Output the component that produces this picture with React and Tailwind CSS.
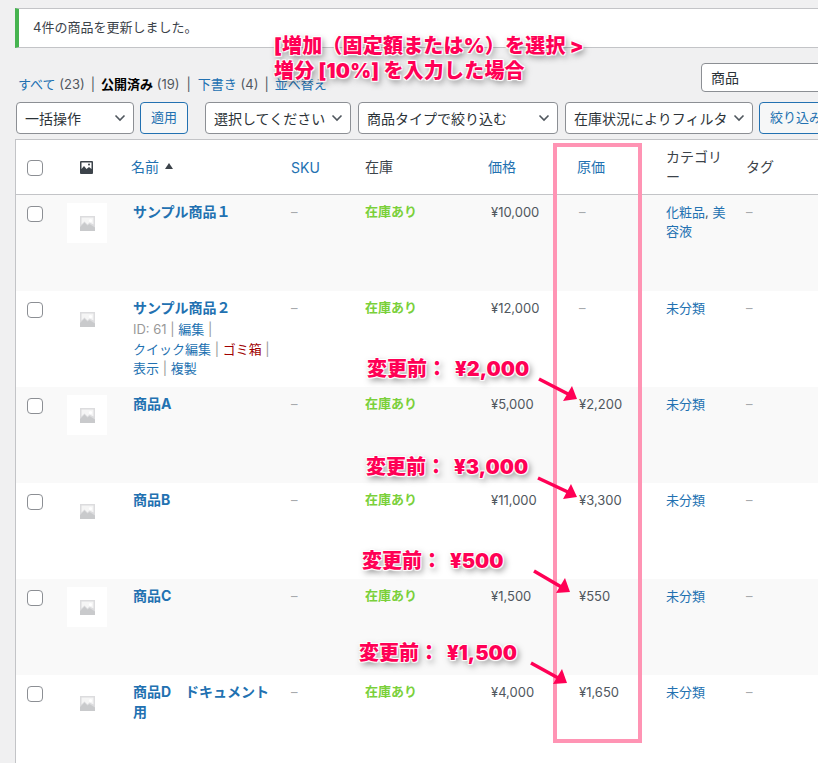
import React from 'react'

const rowCols = 'grid grid-cols-[51px_66px_158px_74px_123px_89px_89px_80px_100px]'

const products = [
  { name: 'サンプル商品１', price: '¥10,000', cost: '–', cat: ['化粧品', '美容液'] },
  { name: 'サンプル商品２', price: '¥12,000', cost: '–', cat: ['未分類'], actions: true },
  { name: '商品A', price: '¥5,000', cost: '¥2,200', cat: ['未分類'] },
  { name: '商品B', price: '¥11,000', cost: '¥3,300', cat: ['未分類'] },
  { name: '商品C', price: '¥1,500', cost: '¥550', cat: ['未分類'] },
  { name: '商品D　ドキュメント用', price: '¥4,000', cost: '¥1,650', cat: ['未分類'] },
]

const notes = [
  { label: '変更前：', value: '¥2,000', pos: 'left-[367px] top-[355px]' },
  { label: '変更前：', value: '¥3,000', pos: 'left-[366px] top-[453px]' },
  { label: '変更前：', value: '¥500', pos: 'left-[362px] top-[547px]' },
  { label: '変更前：', value: '¥1,500', pos: 'left-[359px] top-[639px]' },
]

const arrows = [
  { x1: 539, y1: 379, x2: 577, y2: 399, head: '577,399 563,401 572,386' },
  { x1: 538, y1: 478, x2: 577, y2: 497, head: '577,497 563,499 571,484' },
  { x1: 534, y1: 571, x2: 570, y2: 592, head: '570,592 556,593 565,578' },
  { x1: 531, y1: 663, x2: 567, y2: 683, head: '567,683 553,684 562,669' },
]

const Chevron = () => (
  <svg width="12" height="8" viewBox="0 0 12 8" fill="none" stroke="#50575e" strokeWidth="1.6" className="shrink-0">
    <path d="M1.5 1.5 6 6l4.5-4.5" />
  </svg>
)

const Select = ({ label, w }) => (
  <div className={`${w} h-[32px] flex items-center justify-between pl-[8px] pr-[7px] bg-white border border-[#8c8f94] rounded-[4px] text-[14px] text-[#2c3338] whitespace-nowrap`}>
    <span>{label}</span>
    <Chevron />
  </div>
)

const Checkbox = () => <span className="block w-4 h-4 bg-white border border-[#8c8f94] rounded-[4px]" />

const Thumb = () => (
  <div className="w-10 h-10 bg-white flex items-center justify-center">
    <svg width="15" height="15" viewBox="0 0 15 15">
      <rect width="15" height="15" fill="#dcdcde" />
      <path d="M0 11 4.5 6.5l3 3 2-1.5L15 11.5V15H0z" fill="#c9cacc" />
      <circle cx="10.5" cy="4.5" r="1.6" fill="#fff" />
      <path d="M1.5 1.5h12v7l-4-2-2 2-3-3-3 3z" fill="#fff" opacity="0.7" />
    </svg>
  </div>
)

const Sep = () => <span className="text-[#999999]"> | </span>

const Row = ({ item, index }) => (
  <div className={`${rowCols} h-[96px] text-[13px] leading-[20px] ${index % 2 === 0 ? 'bg-[#f9f9f9]' : 'bg-white'}`}>
    <div className="pl-[11px] pt-[11px]"><Checkbox /></div>
    <div className="pt-[8px]"><Thumb /></div>
    <div className="pt-[7px] pr-[14px]">
      <div className="text-[14px] font-bold text-[#2271b1]">{item.name}</div>
      {item.actions && (
        <div className="text-[13px] leading-[19.5px] text-[#999999] pt-[2px]">
          <span className="whitespace-nowrap">ID: 61<Sep /></span>
          <span className="whitespace-nowrap text-[#2271b1]">編集<Sep /></span>{' '}
          <span className="whitespace-nowrap text-[#2271b1]">クイック編集<Sep /></span>
          <span className="whitespace-nowrap text-[#a00000]">ゴミ箱<Sep /></span>{' '}
          <span className="whitespace-nowrap text-[#2271b1]">表示<Sep /></span>
          <span className="whitespace-nowrap text-[#2271b1]">複製</span>
        </div>
      )}
    </div>
    <div className="pt-[7px] text-[#a7aaad]">–</div>
    <div className="pt-[6px] font-bold text-[#7ad03a]">在庫あり</div>
    <div className="pt-[7px] pl-[3px] text-[#50575e]">{item.price}</div>
    <div className={`pt-[7px] pl-[2px] ${item.cost === '–' ? 'text-[#a7aaad]' : 'text-[#50575e]'}`}>{item.cost}</div>
    <div className="pt-[8px] pr-[11px] leading-[19px] text-[#2271b1]">
      {item.cat.map((c, i) => (
        <span key={c}>{i > 0 && <span className="text-[#50575e]">, </span>}{c}</span>
      ))}
    </div>
    <div className="pt-[7px] text-[#a7aaad]">–</div>
  </div>
)

const noteText = "font-black text-[#ff0055] [text-shadow:0_0_1px_#fff,1px_1px_1px_#fff,-1px_-1px_1px_#fff,1px_-1px_1px_#fff,-1px_1px_1px_#fff,2px_3px_6px_rgba(0,0,0,0.5)]"

export default function App() {
  return (
    <div className="relative w-[818px] h-[763px] overflow-hidden bg-[#f0f0f1] pl-[15px] pt-[8px] font-['Inter','Noto_Sans_CJK_JP',sans-serif] text-[#3c434a]">
      <div className="w-[900px] h-[40px] flex items-center pl-[14px] bg-white border border-[#c3c4c7] border-l-4 border-l-[#46b450] text-[13px]">
        4件の商品を更新しました。
      </div>

      <div className="flex justify-between w-[803px] h-[29px] mt-[15px] pl-[3px]">
        <div className="pt-[9px] text-[13px] leading-[24px] text-[#50575e] whitespace-nowrap">
          <span className="text-[#2271b1]">すべて</span> (23)<span className="text-[#50575e] px-[6px]">|</span>
          <span className="font-bold text-black">公開済み</span> (19)<span className="text-[#50575e] px-[7px]">|</span>
          <span className="text-[#2271b1]">下書き</span> (4)<span className="text-[#50575e] px-[6px]">|</span>
          <span className="text-[#2271b1]">並べ替え</span>
        </div>
        <div className="w-[118px] h-[29px] -mr-[1px] shrink-0 flex items-center pl-[9px] bg-white border border-[#8c8f94] rounded-l-[4px] text-[14px] text-[#2c3338]">商品</div>
      </div>

      <div className="flex items-center w-[900px] mt-[10px] pl-[1px]">
        <Select label="一括操作" w="w-[118px]" />
        <div className="w-[48px] h-[32px] ml-[6px] flex items-center justify-center bg-[#f6f7f7] border border-[#2271b1] rounded-[4px] text-[13px] text-[#2271b1]">適用</div>
        <div className="w-[17px] shrink-0" />
        <Select label="選択してください" w="w-[146px]" />
        <div className="w-[7px] shrink-0" />
        <Select label="商品タイプで絞り込む" w="w-[200px]" />
        <div className="w-[7px] shrink-0" />
        <Select label="在庫状況によりフィルタ" w="w-[188px]" />
        <div className="w-[100px] h-[32px] ml-[6px] flex items-center pl-[10px] bg-[#f6f7f7] border border-[#2271b1] rounded-[4px] text-[13px] text-[#2271b1] whitespace-nowrap">絞り込み</div>
      </div>

      <div className="w-[900px] mt-[5px] bg-white border border-[#c3c4c7]">
        <div className={`${rowCols} h-[55px] items-center text-[14px] leading-[25px] border-b border-[#c3c4c7] text-[#3c434a]`}>
          <div className="pl-[11px] mt-[2px]"><Checkbox /></div>
          <div className="pl-[13px]">
            <svg width="13" height="13" viewBox="0 0 13 13" className="block">
              <rect width="13" height="13" rx="1" fill="#3c434a" />
              <path d="M1.5 1.5h10v6.5L9 6 6.5 8 4 5 1.5 8z" fill="#fff" />
              <circle cx="9" cy="3.6" r="1" fill="#3c434a" />
            </svg>
          </div>
          <div className="text-[#2271b1] flex items-center -ml-[2px] -mt-[2px]">
            名前
            <svg width="8" height="6" viewBox="0 0 8 6" className="ml-[6px]"><path d="M4 0l4 6H0z" fill="#3c434a" /></svg>
          </div>
          <div className="text-[#2271b1]">SKU</div>
          <div className="-mt-[2px]">在庫</div>
          <div className="text-[#2271b1] -mt-[2px]">価格</div>
          <div className="text-[#2271b1] -mt-[2px]">原価</div>
          <div className="w-[56px] leading-[20px]">カテゴリー</div>
          <div className="-mt-[2px]">タグ</div>
        </div>
        {products.map((item, i) => <Row key={item.name} item={item} index={i} />)}
      </div>

      {/* annotations over the screenshot */}
      <div className="absolute left-[553px] top-[143px] w-[89px] h-[600px] border-4 border-[#ff94b4]" />

      <div className={`absolute left-[274px] top-[34px] text-[20px] leading-[25px] tracking-[0.2px] whitespace-nowrap ${noteText}`}>
        <div>[増加（固定額または%）を選択 &gt;</div>
        <div>増分 [10%] を入力した場合</div>
      </div>

      {notes.map(n => (
        <div key={n.pos} className={`absolute ${n.pos} text-[20px] leading-[28px] whitespace-nowrap ${noteText}`}>
          {n.label}<span className="ml-[8px]">{n.value}</span>
        </div>
      ))}

      <svg width="818" height="763" className="absolute left-0 top-0 pointer-events-none">
        {arrows.map(a => (
          <g key={a.head}>
            <line x1={a.x1} y1={a.y1} x2={a.x2 - 7} y2={a.y2 - 4} stroke="#ff0055" strokeWidth="3.5" />
            <polygon points={a.head} fill="#ff0055" />
          </g>
        ))}
      </svg>
    </div>
  )
}
